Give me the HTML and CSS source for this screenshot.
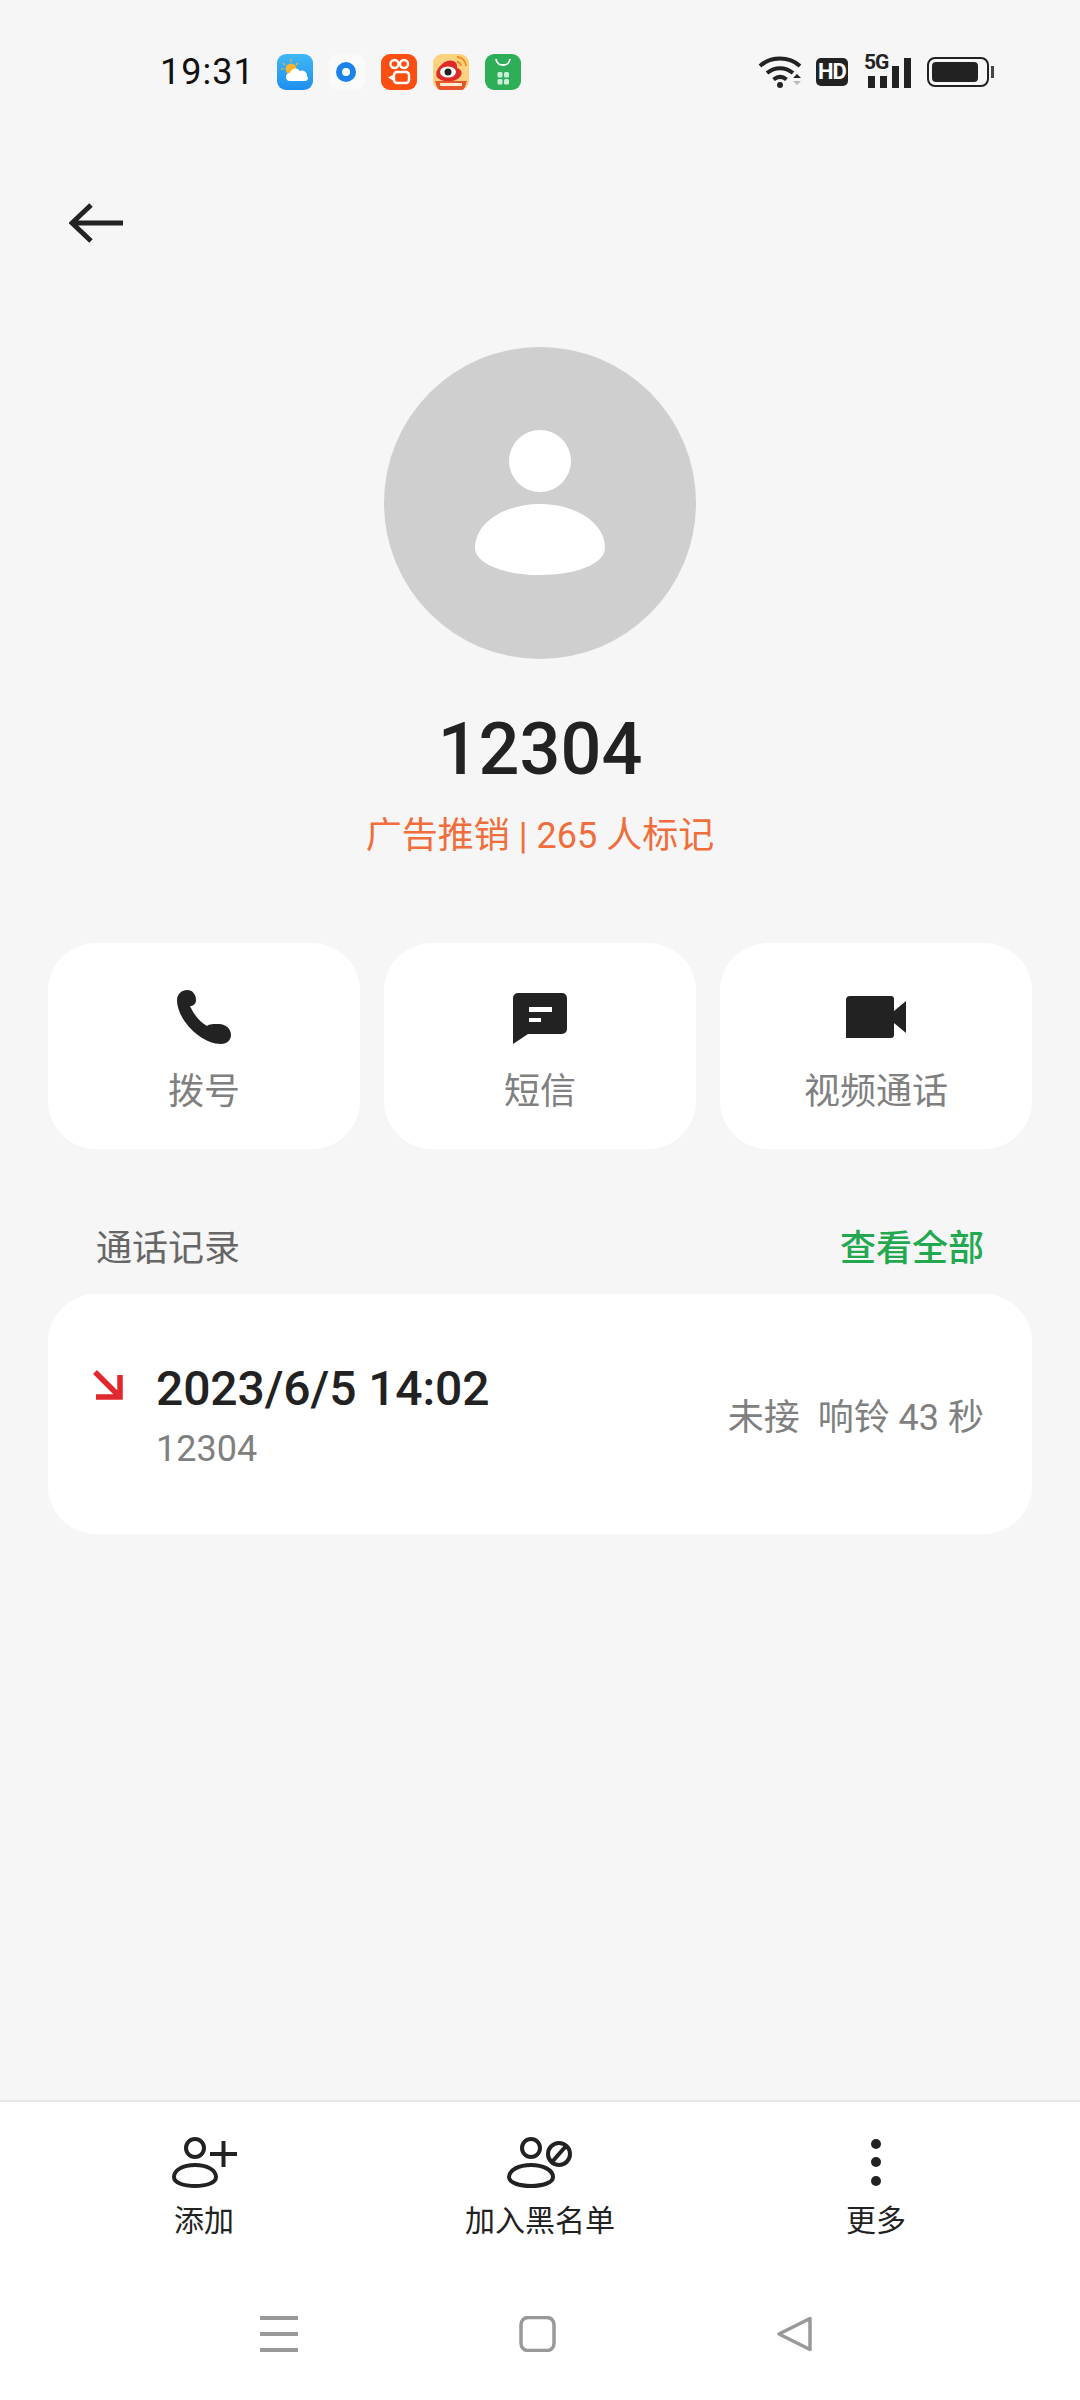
FILE: index.html
```html
<!DOCTYPE html>
<html lang="zh-CN">
<head>
  <meta charset="UTF-8">
  <meta name="viewport" content="width=device-width, initial-scale=1.0">
  <title>12304</title>
  <link rel="stylesheet" href="styles.css">
</head>
<body>
  <div class="page">
    <!-- Status bar -->
    <div class="status-bar">
      <span class="time">19:31</span>
      <div class="app-icons">
        <svg class="app-icon" viewBox="0 0 36 36">
          <defs>
            <linearGradient id="sky" x1="0" y1="0" x2="0" y2="1">
              <stop offset="0" stop-color="#3fb8f5"/>
              <stop offset="1" stop-color="#1e8fef"/>
            </linearGradient>
          </defs>
          <rect width="36" height="36" rx="9" fill="url(#sky)"/>
          <circle cx="14" cy="15" r="5.5" fill="#fbb32c"/>
          <path d="M14 5v3M6 9l2 2M4 15h3M21 9l-2 2" stroke="#fbb32c" stroke-width="1.2"/>
          <path d="M13 27a4 4 0 0 1 0-8 5.500 5.500 0 0 1 10-2 5 5 0 0 1 7 5 3 3 0 0 1-1 5z" fill="#fff"/>
        </svg>
        <svg class="app-icon" viewBox="0 0 36 36">
          <rect width="36" height="36" rx="9" fill="#fafafa"/>
          <circle cx="17" cy="18" r="10" fill="#1a82e8"/>
          <circle cx="17" cy="18" r="4" fill="#fff"/>
        </svg>
        <svg class="app-icon" viewBox="0 0 36 36">
          <rect width="36" height="36" rx="9" fill="#fb4f12"/>
          <circle cx="13.500" cy="10" r="4" fill="none" stroke="#fff" stroke-width="2.400"/>
          <circle cx="23" cy="10" r="4" fill="none" stroke="#fff" stroke-width="2.400"/>
          <rect x="13" y="18" width="15" height="11" rx="3" fill="none" stroke="#fff" stroke-width="2.400"/>
          <path d="M12 21l-5 2.500 5 3z" fill="#fff"/>
        </svg>
        <svg class="app-icon" viewBox="0 0 36 36">
          <rect width="36" height="36" rx="9" fill="#fdd27e"/>
          <path d="M14 7C7 10 1 18 4 23c3 5 17 6 22 1 5-5 2-9-2-10 1-6-4-9-10-7z" fill="#e02a2a"/>
          <ellipse cx="15" cy="18" rx="8" ry="5.500" fill="#fff"/>
          <circle cx="15" cy="18" r="3.500" fill="#222"/>
          <path d="M24 3a9 9 0 0 1 9 9M24 8a4 4 0 0 1 4 4" fill="none" stroke="#f08a24" stroke-width="1.800"/>
          <path d="M2 27h32l-2 6a4 4 0 0 1-3 3H7a4 4 0 0 1-3-3z" fill="#e8552c"/>
          <path d="M7 30.500h22" stroke="#ffe9d0" stroke-width="3"/>
        </svg>
        <svg class="app-icon" viewBox="0 0 36 36">
          <rect width="36" height="36" rx="9" fill="#2fae5a"/>
          <path d="M11 5c1 8 13 8 14 0" fill="none" stroke="#fff" stroke-width="1.800"/>
          <rect x="12.500" y="18" width="5" height="5.500" rx="1.500" fill="#cdeed6"/>
          <rect x="19" y="18" width="5" height="5.500" rx="1.500" fill="#cdeed6"/>
          <rect x="12.500" y="25" width="5" height="5.500" rx="1.500" fill="#cdeed6"/>
          <rect x="19" y="25" width="5" height="5.500" rx="1.500" fill="#cdeed6"/>
        </svg>
      </div>
      <div class="sys-icons">
        <svg class="wifi" viewBox="0 0 46 34">
          <path d="M2 11C13 1 31 1 42 11" fill="none" stroke="#222" stroke-width="4"/>
          <path d="M9 18c8-6.500 18-6.500 26 0" fill="none" stroke="#222" stroke-width="4"/>
          <path d="M15.500 24.500c4.500-3.500 9-3.500 13 0" fill="none" stroke="#222" stroke-width="4"/>
          <circle cx="22" cy="30" r="3" fill="#222"/>
          <path d="M35 23l4-4 4 4z" fill="#222"/>
          <path d="M35 26l4 4 4-4z" fill="#bbb"/>
        </svg>
        <div class="hd">HD</div>
        <div class="signal">
          <span class="five-g">5G</span>
          <div class="bars">
            <i class="bar bar-1"></i>
            <i class="bar bar-2"></i>
            <i class="bar bar-3"></i>
            <i class="bar bar-4"></i>
          </div>
        </div>
        <div class="battery">
          <div class="battery-body"><div class="battery-level"></div></div>
          <div class="battery-nub"></div>
        </div>
      </div>
    </div>

    <!-- Back -->
    <div class="back-row">
      <svg class="back" viewBox="0 0 54 40">
        <path d="M54 20H3M22 2L3 20l19 18" fill="none" stroke="#222" stroke-width="5"/>
      </svg>
    </div>

    <!-- Contact -->
    <div class="contact">
      <div class="avatar">
        <svg class="avatar-person" viewBox="0 0 132 146">
          <circle cx="66" cy="31" r="31" fill="#fff"/>
          <path d="M1 118C1 93 30 74 66 74s65 19 65 44c0 16-30 27-65 27S1 134 1 118z" fill="#fff"/>
        </svg>
      </div>
      <div class="number">12304</div>
      <div class="tag">广告推销 | 265 人标记</div>
    </div>

    <!-- Actions -->
    <div class="actions">
      <div class="action">
        <svg class="action-icon" viewBox="0 0 54 54">
          <path d="M0 10C0 4 5 0 10 0c6 0 9 5 9 10 0 4-3 6-6 6 4 9 10 16 17 20 2-2 7-2 12-2 7 0 12 5 12 11 0 5-4 9-10 9C24 54 0 30 0 10z" fill="#222"/>
        </svg>
        <span class="action-label">拨号</span>
      </div>
      <div class="action">
        <svg class="action-icon" viewBox="0 0 54 54">
          <path d="M5 3h44a5 5 0 0 1 5 5v31a5 5 0 0 1-5 5H15L0 54V8a5 5 0 0 1 5-5z" fill="#222"/>
          <path d="M16 17h23v5H16zM16 28h12v4H16z" fill="#fff"/>
        </svg>
        <span class="action-label">短信</span>
      </div>
      <div class="action">
        <svg class="action-icon" viewBox="0 0 60 54">
          <path d="M4 6h41a3 3 0 0 1 3 3v36a3 3 0 0 1-3 3H0V10a4 4 0 0 1 4-4z" fill="#222"/>
          <path d="M48 21l12-10v32L48 33z" fill="#222"/>
        </svg>
        <span class="action-label">视频通话</span>
      </div>
    </div>

    <!-- Call log -->
    <div class="section-head">
      <span class="section-title">通话记录</span>
      <span class="section-link">查看全部</span>
    </div>
    <div class="call-card">
      <svg class="call-arrow" viewBox="0 0 30 30">
        <path d="M2 2l23 23M27 5v22H3" fill="none" stroke="#e0282e" stroke-width="5.500"/>
      </svg>
      <div class="call-info">
        <div class="call-time">2023/6/5 14:02</div>
        <div class="call-number">12304</div>
      </div>
      <div class="call-status">未接&nbsp; 响铃 43 秒</div>
    </div>

    <!-- Bottom toolbar -->
    <div class="bottom">
      <div class="toolbar">
        <div class="tool">
          <svg class="tool-icon" viewBox="0 0 68 54">
            <circle cx="25" cy="11" r="9" fill="none" stroke="#222" stroke-width="4"/>
            <path d="M4 40c0-7 9-12 21-12s21 5 21 12c0 6-10 9-21 9S4 46 4 40z" fill="none" stroke="#222" stroke-width="4"/>
            <path d="M40 17h27M53.500 4v26" stroke="#222" stroke-width="4"/>
          </svg>
          <span class="tool-label">添加</span>
        </div>
        <div class="tool">
          <svg class="tool-icon" viewBox="0 0 68 54">
            <circle cx="25" cy="11" r="9" fill="none" stroke="#222" stroke-width="4"/>
            <path d="M3 40c0-7 10-12 22-12s22 5 22 12c0 6-11 9-22 9S3 46 3 40z" fill="none" stroke="#222" stroke-width="4"/>
            <circle cx="53" cy="17" r="11" fill="none" stroke="#222" stroke-width="4"/>
            <path d="M46 25l14-16" stroke="#222" stroke-width="4"/>
          </svg>
          <span class="tool-label">加入黑名单</span>
        </div>
        <div class="tool">
          <svg class="tool-icon" viewBox="0 0 68 54">
            <circle cx="34" cy="7" r="5" fill="#222"/>
            <circle cx="34" cy="25" r="5" fill="#222"/>
            <circle cx="34" cy="44" r="5" fill="#222"/>
          </svg>
          <span class="tool-label">更多</span>
        </div>
      </div>
      <div class="nav-bar">
        <svg class="nav-icon" viewBox="0 0 38 36">
          <path d="M0 2h38M0 18h38M0 34h38" stroke="#999" stroke-width="4"/>
        </svg>
        <svg class="nav-icon" viewBox="0 0 38 36">
          <rect x="3" y="1.500" width="33" height="33" rx="7" fill="none" stroke="#999" stroke-width="3.500"/>
        </svg>
        <svg class="nav-icon" viewBox="0 0 38 36">
          <path d="M34 2.500v31L3 18z" fill="none" stroke="#999" stroke-width="3.500" stroke-linejoin="round"/>
        </svg>
      </div>
    </div>
  </div>
</body>
</html>
```

FILE: styles.css
```css
* {
  box-sizing: border-box;
}
body {
  margin: 0;
  font-family: Roboto, "Noto Sans CJK SC", sans-serif;
  background-color: #f6f6f6;
  color: #222;
}
.page {
  width: 1080px;
  height: 2400px;
  display: flex;
  flex-direction: column;
}

/* status bar */
.status-bar {
  height: 144px;
  padding: 0 86px 0 160px;
  display: flex;
  align-items: center;
}
.time {
  width: 117px;
  font-size: 36px;
  letter-spacing: 1px;
  color: #111;
}
.app-icons {
  display: flex;
  gap: 16px;
}
.app-icon {
  width: 36px;
  height: 36px;
  display: block;
}
.sys-icons {
  margin-left: auto;
  display: flex;
  align-items: center;
}
.wifi {
  width: 46px;
  height: 34px;
}
.hd {
  width: 32px;
  height: 28px;
  margin-left: 12px;
  border-radius: 5px;
  background-color: #222;
  color: #fff;
  font-size: 22px;
  font-weight: 700;
  line-height: 28px;
  text-align: center;
  letter-spacing: -1px;
}
.signal {
  position: relative;
  width: 48px;
  height: 32px;
  margin-left: 16px;
}
.five-g {
  position: absolute;
  left: 0;
  top: -5px;
  font-size: 21px;
  font-weight: 700;
  letter-spacing: -1px;
  line-height: 22px;
}
.bars {
  height: 32px;
  padding-left: 4px;
  display: flex;
  align-items: flex-end;
  gap: 5px;
}
.bar {
  width: 7px;
  background-color: #222;
}
.bar-1, .bar-2 {
  height: 12px;
}
.bar-3 {
  height: 22px;
}
.bar-4 {
  height: 30px;
}
.battery {
  margin-left: 15px;
  display: flex;
  align-items: center;
  gap: 2px;
}
.battery-body {
  width: 62px;
  height: 30px;
  padding: 3px;
  border: 2.500px solid #222;
  border-radius: 8px;
}
.battery-level {
  width: 46px;
  height: 100%;
  border-radius: 4px;
  background-color: #222;
}
.battery-nub {
  width: 3px;
  height: 12px;
  background-color: #444;
}

/* back */
.back-row {
  height: 122px;
  padding: 59px 0 0 69px;
}
.back {
  width: 54px;
  height: 40px;
  display: block;
}

/* contact */
.contact {
  margin-top: 81px;
  display: flex;
  flex-direction: column;
  align-items: center;
}
.avatar {
  width: 312px;
  height: 312px;
  border-radius: 50%;
  background-color: #cfcfcf;
  display: flex;
  justify-content: center;
  padding-top: 83px;
}
.avatar-person {
  width: 132px;
  height: 146px;
}
.number {
  margin-top: 49px;
  font-size: 72px;
  font-weight: 500;
  line-height: 84px;
}
.tag {
  margin-top: 20px;
  font-size: 36px;
  line-height: 48px;
  color: #f06d3c;
}

/* actions */
.actions {
  margin-top: 83px;
  padding: 0 48px;
  display: grid;
  grid-template-columns: repeat(3, 1fr);
  gap: 24px;
}
.action {
  height: 206px;
  padding-top: 47px;
  border-radius: 48px;
  background-color: #fff;
  display: flex;
  flex-direction: column;
  align-items: center;
}
.action-icon {
  height: 54px;
  display: block;
}
.action-label {
  margin-top: 24px;
  font-size: 36px;
  line-height: 48px;
  color: #808080;
}

/* call log */
.section-head {
  margin-top: 76px;
  padding: 0 96px;
  display: flex;
  justify-content: space-between;
  font-size: 36px;
  line-height: 48px;
}
.section-title {
  color: #666;
}
.section-link {
  color: #22a84f;
  font-weight: 500;
}
.call-card {
  height: 240px;
  margin: 21px 48px 0;
  padding: 0 48px 0 45px;
  border-radius: 48px;
  background-color: #fff;
  display: flex;
  align-items: center;
}
.call-arrow {
  width: 30px;
  height: 30px;
  align-self: flex-start;
  margin-top: 76px;
}
.call-info {
  margin-left: 33px;
}
.call-time {
  font-size: 48px;
  font-weight: 500;
  line-height: 60px;
  letter-spacing: -0.1px;
}
.call-number {
  margin-top: 9px;
  font-size: 36px;
  line-height: 42px;
  color: #808080;
}
.call-status {
  margin-left: auto;
  font-size: 36px;
  color: #808080;
}

/* bottom */
.bottom {
  margin-top: auto;
  height: 300px;
  border-top: 2px solid #e8e8e8;
  background-color: #fff;
}
.toolbar {
  padding: 35px 36px 0;
  display: grid;
  grid-template-columns: repeat(3, 1fr);
}
.tool {
  display: flex;
  flex-direction: column;
  align-items: center;
}
.tool-icon {
  width: 68px;
  height: 54px;
  display: block;
}
.tool-label {
  margin-top: 10px;
  font-size: 30px;
  line-height: 40px;
}
.nav-bar {
  margin-top: 75px;
  padding: 0 266px 0 260px;
  display: flex;
  justify-content: space-between;
}
.nav-icon {
  width: 38px;
  height: 36px;
  display: block;
}
```
